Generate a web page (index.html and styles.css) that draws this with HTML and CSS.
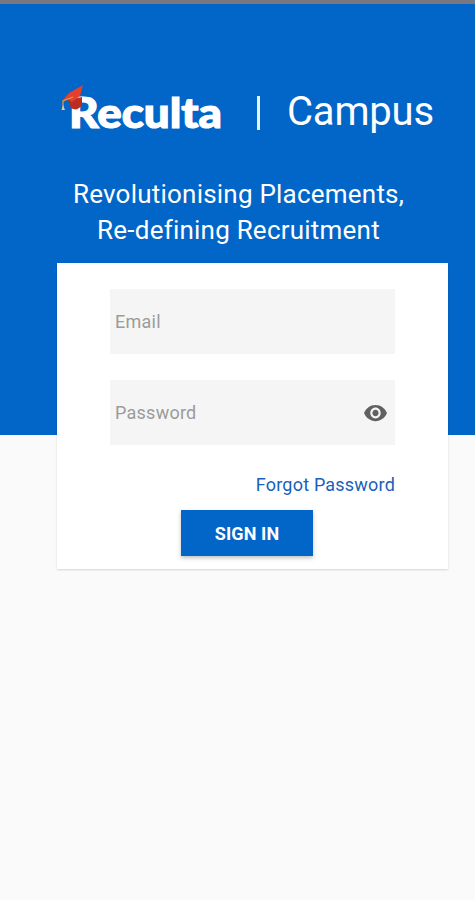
FILE: index.html
```html
<!DOCTYPE html>
<html lang="en">
<head>
<meta charset="utf-8">
<title>Reculta Campus</title>
<link rel="stylesheet" href="styles.css">
</head>
<body>
<header class="hero">
  <div class="brand">
    <svg class="logo" width="166" height="56" viewBox="0 0 166 56" role="img" aria-label="Reculta">
      <text class="logo-text" x="12" y="44.500" textLength="153" lengthAdjust="spacingAndGlyphs">Reculta</text>
      <path d="M11 17 L14 25 Q20 29 25 22 L25 14Z" fill="#b92d22"/>
      <path d="M5 18 L12 10 L26 2 L23 13 L15 19 L11 16Z" fill="#e4402b"/>
      <path d="M16 14 L6 18 L6 24" fill="none" stroke="#d6a15c" stroke-width="1.200"/>
      <path d="M6 22 L8 27 L4.500 27Z" fill="#e8c98b"/>
    </svg>
    <span class="divider"></span>
    <span class="product">Campus</span>
  </div>
  <h1 class="tagline">Revolutionising Placements,<br>Re-defining Recruitment</h1>
</header>
<main class="card">
  <div class="field"><span>Email</span></div>
  <div class="field"><span>Password</span>
    <svg class="eye" width="25" height="26" viewBox="0 0 24 24" preserveAspectRatio="none"><path fill="#616161" d="M12 4.500C7 4.500 2.730 7.610 1 12c1.730 4.390 6 7.500 11 7.500s9.270-3.110 11-7.500c-1.730-4.390-6-7.500-11-7.500zM12 17c-2.760 0-5-2.240-5-5s2.240-5 5-5 5 2.240 5 5-2.240 5-5 5zm0-8c-1.660 0-3 1.340-3 3s1.340 3 3 3 3-1.340 3-3-1.340-3-3-3z"/></svg>
  </div>
  <a class="forgot">Forgot Password</a>
  <button class="submit">SIGN IN</button>
</main>
</body>
</html>
```
FILE: styles.css
```css
* { box-sizing: border-box; }
body {
  margin: 0;
  min-height: 900px;
  background: #fafafa;
  font-family: Roboto, sans-serif;
}
.hero {
  height: 435px;
  padding-top: 79px;
  border-top: 4px solid #7b7780;
  background: #0265c8;
  color: #fff;
}
.brand {
  display: flex;
  height: 56px;
  padding-left: 57px;
}
.logo { display: block; }
.logo-text {
  font: 900 42px Lato, sans-serif;
  fill: #fff;
  stroke: #fff;
  stroke-width: 1.2px;
}
.divider {
  width: 3px;
  height: 34px;
  margin: 13px 0 0 34px;
  background: #e8f1fb;
}
.product {
  margin-left: 27px;
  font-size: 40px;
  line-height: 57px;
  letter-spacing: -0.2px;
}
.tagline {
  margin: 37px 0 0 2px;
  font-size: 26px;
  font-weight: 400;
  line-height: 36px;
  letter-spacing: 0.22px;
  text-align: center;
  white-space: nowrap;
}
.card {
  display: flex;
  flex-direction: column;
  width: 391px;
  height: 306px;
  margin: -172px 0 0 57px;
  padding: 26px 53px 13px;
  background: #fff;
  box-shadow: 0 1px 2px rgba(0, 0, 0, 0.15);
  position: relative;
}
.field {
  display: flex;
  align-items: center;
  justify-content: space-between;
  height: 65px;
  margin-bottom: 26px;
  padding: 0 7px 0 5px;
  background: #f5f5f5;
  color: #9b9b9b;
  font-size: 18px;
  letter-spacing: 0.25px;
}
.forgot {
  align-self: flex-end;
  margin-top: 3px;
  color: #1a5fba;
  font-size: 18px;
  line-height: 22px;
  letter-spacing: 0.2px;
}
.submit {
  width: 132px;
  height: 46px;
  margin: 14px 0 0 71px;
  padding: 0;
  border: 0;
  background: #0265c8;
  box-shadow: 0 2px 4px rgba(0, 0, 0, 0.25);
  color: #fff;
  font: 700 18px Roboto, sans-serif;
  letter-spacing: 0.1px;
}
```
